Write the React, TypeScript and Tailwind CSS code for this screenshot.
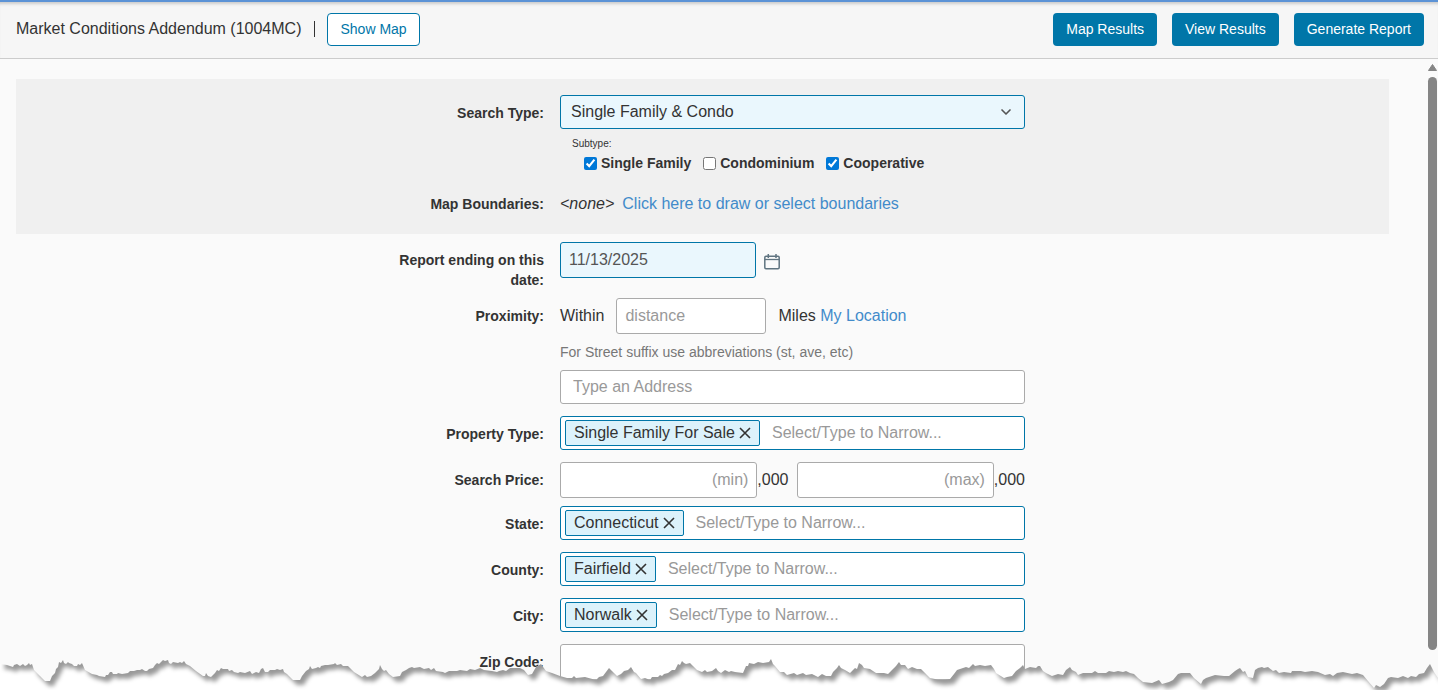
import { useState } from "react";
import type { ReactNode } from "react";
import { ChevronDown } from "lucide-react";

const inputBase =
  "rounded-[3px] border border-[#aaa] bg-white text-base text-[#555] outline-none placeholder:text-[#999]";

// x,y pairs along the ragged bottom edge of the sheet
const tearPoints =
  "0,8 7,9 10,10 13,11 14,9 17,8 20,10 23,8 25,10 27,9 29,7 30,9 32,8 34,14 40,20 45,25 50,25 52,20 55,17 56,13 58,11 59,6 61,7 63,4 64,7 66,8 68,6 69,7 72,8 74,10 77,10 78,8 80,9 82,7 85,14 92,18 97,19 99,20 105,21 106,19 108,19 110,16 112,16 113,18 117,18 118,17 122,18 128,17 130,15 134,15 137,14 140,14 142,13 145,15 147,15 149,13 153,12 155,9 157,7 159,8 161,6 163,4 165,5 168,4 169,7 171,8 173,6 178,7 180,6 182,7 184,5 186,8 190,10 196,15 203,20 205,20 206,17 208,20 211,21 215,17 217,14 219,15 221,12 223,13 228,13 229,15 232,14 234,16 238,17 240,16 245,17 250,15 252,18 256,16 259,17 261,13 263,12 265,16 268,16 270,14 275,14 277,13 280,14 283,13 284,16 287,18 293,24 300,24 302,20 306,15 309,13 310,10 312,13 316,12 318,11 320,12 321,10 325,9 328,9 334,8 335,7 337,9 341,8 343,10 348,10 350,12 354,16 362,21 365,19 367,21 371,20 375,17 377,15 379,13 380,9 382,13 384,15 386,14 389,18 393,21 400,20 402,16 406,14 409,12 412,11 414,12 420,11 424,13 429,12 431,14 434,12 436,15 443,16 445,17 449,15 457,15 460,14 467,15 470,13 475,14 480,12 484,14 492,15 497,16 499,15 503,14 506,15 510,12 520,12 524,14 528,19 532,18 536,11 541,8 546,15 552,17 560,20 567,22 572,22 574,20 576,22 585,21 596,24 599,21 603,20 606,16 609,12 612,15 615,18 617,20 621,18 624,15 628,14 631,11 634,16 636,17 641,23 645,22 650,24 652,21 658,21 660,19 662,20 664,18 668,17 672,14 675,14 678,8 680,9 682,5 684,7 686,8 690,7 693,10 697,14 702,16 705,14 707,16 712,15 716,12 718,15 721,17 725,14 729,16 731,15 735,16 743,17 746,10 748,10 749,7 754,8 758,6 763,7 769,6 771,3 773,8 775,10 780,16 784,16 787,19 794,17 797,19 803,17 806,19 812,18 818,21 822,18 826,20 831,20 833,16 837,12 839,9 841,12 845,14 850,17 853,14 855,12 857,13 859,7 862,9 864,12 870,13 876,17 884,17 888,18 893,13 896,10 899,6 901,9 905,9 908,13 912,11 917,13 921,13 925,17 930,22 940,24 950,23 954,18 957,14 960,13 966,11 969,12 973,8 975,10 980,9 985,10 991,9 994,13 996,17 1004,22 1007,21 1012,20 1016,15 1020,12 1023,9 1025,13 1030,11 1036,12 1038,10 1040,10 1043,15 1046,17 1052,20 1058,18 1063,19 1066,14 1070,11 1072,14 1076,16 1078,19 1083,17 1092,17 1095,15 1098,17 1106,17 1109,15 1114,16 1118,15 1123,16 1126,15 1130,17 1134,18 1138,22 1143,26 1152,27 1159,24 1162,28 1169,26 1173,24 1178,18 1181,17 1190,17 1194,22 1201,28 1203,24 1206,22 1215,19 1224,20 1229,20 1235,15 1238,13 1240,12 1243,16 1245,15 1248,21 1253,22 1255,14 1258,12 1262,11 1264,12 1268,11 1273,15 1276,14 1279,17 1284,16 1291,17 1292,15 1301,15 1305,16 1312,15 1318,16 1325,19 1330,18 1333,20 1337,17 1343,16 1352,18 1357,17 1363,19 1368,25 1374,32 1376,29 1380,31 1384,28 1388,22 1391,21 1398,22 1403,20 1408,22 1411,20 1416,21 1419,18 1424,17 1427,12 1430,8 1432,12 1434,16 1438,22";

type FieldRowProps = {
  label: string;
  htmlFor?: string;
  className?: string;
  children: ReactNode;
};

function FieldRow({ label, htmlFor, className = "", children }: FieldRowProps) {
  return (
    <div className={`grid grid-cols-[528fr_829fr] gap-4 ${className}`}>
      <div className="flex justify-end">
        <label
          htmlFor={htmlFor}
          className="max-w-[160px] pt-2 text-right text-sm leading-5 font-bold text-[#333]"
        >
          {label}
        </label>
      </div>
      <div className="max-w-[465px]">{children}</div>
    </div>
  );
}

function TagInput({ id, initial }: { id: string; initial: string[] }) {
  const [tags, setTags] = useState(initial);

  return (
    <div className="flex h-[34px] items-center rounded-[3px] border border-[#0076a8] bg-white px-1">
      {tags.map((tag) => (
        <span
          key={tag}
          className="flex h-[26px] shrink-0 items-center gap-1 rounded-[2px] border border-[#0076a8] bg-[#dcf2fb] px-2 text-base text-[#333]"
        >
          {tag}
          <button
            type="button"
            aria-label={`Remove ${tag}`}
            onClick={() => setTags(tags.filter((t) => t !== tag))}
          >
            <svg width="12" height="12" viewBox="0 0 12 12" className="block">
              <path d="M1 1L11 11M11 1L1 11" stroke="#333" strokeWidth="1.6" />
            </svg>
          </button>
        </span>
      ))}
      <input
        id={id}
        type="text"
        placeholder="Select/Type to Narrow..."
        className="ml-3 min-w-0 flex-1 bg-transparent text-base text-[#555] outline-none placeholder:text-[#999]"
      />
    </div>
  );
}

function Subtype({ label, checked = false }: { label: string; checked?: boolean }) {
  return (
    <label className="flex items-center gap-1 text-sm leading-5 font-bold text-[#333]">
      <input
        type="checkbox"
        defaultChecked={checked}
        className="h-[13px] w-[13px] accent-[#0078d7]"
      />
      {label}
    </label>
  );
}

function CalendarIcon() {
  return (
    <svg width="16" height="16" viewBox="0 0 16 16" fill="none" stroke="#607480">
      <rect x="0.8" y="2.2" width="14.4" height="12.6" rx="1.2" strokeWidth="1.5" />
      <path d="M1 5.5H15" strokeWidth="1.3" />
      <path d="M4.3 0V4M12 0V4" strokeWidth="1.5" />
    </svg>
  );
}

function TornEdge() {
  return (
    <svg
      className="pointer-events-none absolute bottom-0 left-0 h-[34px] w-full"
      viewBox="0 0 1438 34"
      preserveAspectRatio="none"
      aria-hidden="true"
    >
      <defs>
        <clipPath id="below-tear">
          <polygon points={`0,34 ${tearPoints} 1438,34`} />
        </clipPath>
        <filter id="tear-blur" x="-1%" y="-40%" width="102%" height="180%">
          <feGaussianBlur stdDeviation="2" />
        </filter>
      </defs>
      <g clipPath="url(#below-tear)">
        <rect width="1438" height="34" fill="#fff" />
        <g filter="url(#tear-blur)">
          <polygon
            points={`4,-20 ${tearPoints} 1430,-20`}
            fill="#000"
            fillOpacity="0.4"
            transform="translate(4 5)"
          />
        </g>
      </g>
    </svg>
  );
}

const actions = ["Map Results", "View Results", "Generate Report"];

export default function App() {
  return (
    <div className="relative flex h-screen flex-col overflow-hidden bg-[#fafafa] font-['Liberation_Sans',Arial,sans-serif] text-base text-[#333]">
      {/* Header */}
      <header className="flex h-[59px] shrink-0 items-center justify-between border-t-2 border-b border-t-[#5c93d6] border-b-[#ccc] bg-[#f6f6f6] pr-[14px] pb-[2px] pl-4 shadow-[inset_0_4px_3px_-2px_#ccc]">
        <div className="flex items-center">
          <h1 className="text-base">Market Conditions Addendum (1004MC)</h1>
          <span className="mr-3 ml-[13px] h-4 w-px bg-[#333]" />
          <button
            type="button"
            className="h-[33px] rounded border border-[#0076a8] bg-white px-3 text-sm text-[#0076a8]"
          >
            Show Map
          </button>
        </div>
        <div className="flex gap-[15px]">
          {actions.map((action) => (
            <button
              key={action}
              type="button"
              className="h-[33px] rounded bg-[#0076a8] px-[13px] text-sm text-white"
            >
              {action}
            </button>
          ))}
        </div>
      </header>

      <div className="flex min-h-0 flex-1">
        <main className="min-w-0 flex-1 overflow-hidden pt-5 pr-[38px] pl-4">
          <form onSubmit={(e) => e.preventDefault()}>
            {/* Search type and boundaries */}
            <section className="bg-[#f0f0f0] pt-4 pb-[18px]">
              <FieldRow label="Search Type:" htmlFor="search-type">
                <div className="relative">
                  <select
                    id="search-type"
                    className="h-[34px] w-full appearance-none rounded-[3px] border border-[#0076a8] bg-[#eaf7fd] pr-8 pl-[10px] text-base text-[#333] outline-none"
                  >
                    <option>Single Family &amp; Condo</option>
                  </select>
                  <ChevronDown
                    size={16}
                    strokeWidth={2.5}
                    className="pointer-events-none absolute top-[9px] right-[11px] text-[#555]"
                  />
                </div>
                <fieldset className="pl-3">
                  <legend className="pt-2 text-[10px] leading-[14px]">Subtype:</legend>
                  <div className="flex gap-3 pt-0.5 pl-3">
                    <Subtype label="Single Family" checked />
                    <Subtype label="Condominium" />
                    <Subtype label="Cooperative" checked />
                  </div>
                </fieldset>
              </FieldRow>
              <FieldRow label="Map Boundaries:" className="pt-[13px]">
                <p className="pt-1.5 leading-6">
                  <em>&lt;none&gt;</em>
                  <a href="#boundaries" className="ml-2 text-[#428bca]">
                    Click here to draw or select boundaries
                  </a>
                </p>
              </FieldRow>
            </section>

            <FieldRow label="Report ending on this date:" htmlFor="end-date" className="pt-2">
              <div className="flex items-center gap-2">
                <input
                  id="end-date"
                  type="text"
                  defaultValue="11/13/2025"
                  className="h-9 w-[196px] rounded-[3px] border border-[#0076a8] bg-[#eaf7fd] px-2 text-base text-[#555] outline-none"
                />
                <button type="button" aria-label="Choose date" className="pt-1">
                  <CalendarIcon />
                </button>
              </div>
            </FieldRow>

            <FieldRow label="Proximity:" htmlFor="distance" className="pt-2">
              <div className="flex items-center">
                <span>Within</span>
                <input
                  id="distance"
                  type="text"
                  placeholder="distance"
                  className={`${inputBase} mx-3 h-9 w-[150px] px-2`}
                />
                <span>
                  Miles{" "}
                  <a href="#location" className="text-[#428bca]">
                    My Location
                  </a>
                </span>
              </div>
              <p className="py-2 text-sm leading-5 text-[#777]">
                For Street suffix use abbreviations (st, ave, etc)
              </p>
              <input
                type="text"
                aria-label="Address"
                placeholder="Type an Address"
                className={`${inputBase} block h-[34px] w-full px-3`}
              />
            </FieldRow>

            <FieldRow label="Property Type:" htmlFor="property-type" className="pt-3">
              <TagInput id="property-type" initial={["Single Family For Sale"]} />
            </FieldRow>

            <FieldRow label="Search Price:" htmlFor="price-min" className="pt-3">
              <div className="flex items-center">
                <input
                  id="price-min"
                  type="text"
                  placeholder="(min)"
                  className={`${inputBase} h-9 min-w-0 flex-1 px-2 text-right`}
                />
                <span className="mr-2">,000</span>
                <input
                  type="text"
                  aria-label="Maximum price"
                  placeholder="(max)"
                  className={`${inputBase} h-9 min-w-0 flex-1 px-2 text-right`}
                />
                <span>,000</span>
              </div>
            </FieldRow>

            <FieldRow label="State:" htmlFor="state" className="pt-2">
              <TagInput id="state" initial={["Connecticut"]} />
            </FieldRow>

            <FieldRow label="County:" htmlFor="county" className="pt-3">
              <TagInput id="county" initial={["Fairfield"]} />
            </FieldRow>

            <FieldRow label="City:" htmlFor="city" className="pt-3">
              <TagInput id="city" initial={["Norwalk"]} />
            </FieldRow>

            <FieldRow label="Zip Code:" htmlFor="zip" className="pt-3">
              <input id="zip" type="text" className={`${inputBase} block h-9 w-full px-2`} />
            </FieldRow>
          </form>
        </main>

        {/* Scrollbar */}
        <div className="flex w-[11px] shrink-0 flex-col items-center gap-[6px] pt-[5px] pb-10">
          <svg width="9" height="7" viewBox="0 0 9 7" className="shrink-0">
            <path d="M4.5 0.5L8.5 6.5H0.5Z" fill="#858585" stroke="#858585" strokeLinejoin="round" />
          </svg>
          <div className="w-[9px] flex-1 rounded-full bg-[#858585]" />
        </div>
      </div>

      <TornEdge />
    </div>
  );
}
